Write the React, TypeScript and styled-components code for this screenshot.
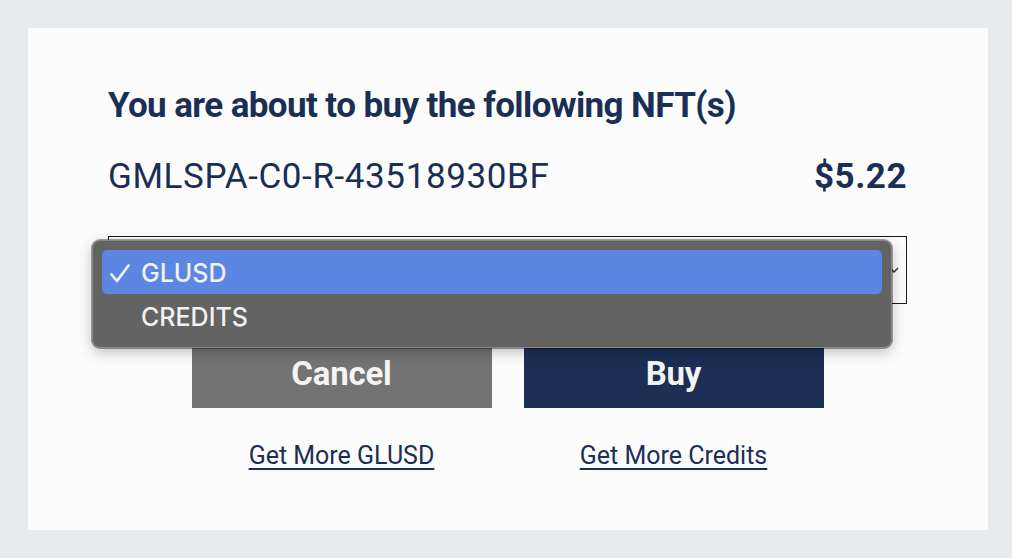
import React from "react";
import styled, { createGlobalStyle } from "styled-components";

const Global = createGlobalStyle`
  html, body { margin: 0; padding: 0; background: #e8ebee; }
  body { font-family: Roboto, "Liberation Sans", sans-serif; }
`;

const Page = styled.div`
  width: 1012px;
  height: 558px;
  box-sizing: border-box;
  padding: 28px 24px 28px 28px;
`;

const Card = styled.div`
  background: #fcfcfc;
  height: 502px;
  box-sizing: border-box;
  padding: 58px 81px 0 80px;
  display: flex;
  flex-direction: column;
`;

const Title = styled.h1`
  margin: 0;
  font-size: 35px;
  line-height: 40px;
  font-weight: 700;
  color: #1b2f55;
  letter-spacing: -0.6px;
`;

const ItemRow = styled.div`
  display: flex;
  justify-content: space-between;
  align-items: center;
  margin-top: 30px;
  color: #1b2f55;
  font-size: 35px;
  line-height: 42px;
`;

const ItemName = styled.span`
  font-weight: 400;
  letter-spacing: 0.6px;
`;

const Price = styled.span`
  font-weight: 700;
  letter-spacing: 0.5px;
`;

const SelectWrap = styled.div`
  position: relative;
  margin-top: 38px;
`;

const SelectBox = styled.div`
  height: 68px;
  box-sizing: border-box;
  border: 1px solid #1a1a1a;
  display: flex;
  justify-content: flex-end;
  align-items: center;
  padding-right: 7px;
`;

const Menu = styled.div`
  position: absolute;
  left: -16px;
  top: 4px;
  width: 800px;
  height: 108px;
  box-sizing: border-box;
  background: #636363;
  border: 1px solid #8a8a8a;
  border-radius: 8px;
  box-shadow: 0 4px 14px rgba(0, 0, 0, 0.25), 0 0 0 1px rgba(0, 0, 0, 0.35);
  padding: 9px 9px;
  display: flex;
  flex-direction: column;
`;

const Option = styled.div<{ $active?: boolean }>`
  height: 44px;
  border-radius: 5px;
  background: ${(p) => (p.$active ? "#5b87e3" : "transparent")};
  color: #f2f2f2;
  font-size: 25px;
  display: flex;
  align-items: center;
  padding-left: 8px;
  padding-top: 2px;
  box-sizing: border-box;
  font-family: Inter, Roboto, sans-serif;
  font-weight: 500;
`;

const Check = styled.span`
  width: 31px;
  display: inline-flex;
  align-items: center;
`;

const Buttons = styled.div`
  display: flex;
  justify-content: center;
  gap: 32px;
  margin-top: 34px;
`;

const Btn = styled.button<{ $primary?: boolean }>`
  width: 300px;
  height: 70px;
  border: none;
  background: ${(p) => (p.$primary ? "#1b2f55" : "#737373")};
  color: #f4f4f4;
  font-family: Roboto, sans-serif;
  font-size: 33px;
  font-weight: 700;
  letter-spacing: -0.2px;
  padding: 0;
`;

const Links = styled.div`
  display: flex;
  justify-content: center;
  gap: 32px;
  margin-top: 33px;
`;

const LinkCell = styled.div`
  width: 300px;
  display: flex;
  justify-content: center;
`;

const Link = styled.a`
  color: #1b2f55;
  font-size: 25px;
  line-height: 30px;
  text-decoration: underline;
  text-underline-offset: 4px;
  text-decoration-thickness: 1.5px;
`;

export default function App() {
  return (
    <>
      <Global />
      <Page>
        <Card>
          <Title>You are about to buy the following NFT(s)</Title>
          <ItemRow>
            <ItemName>GMLSPA-C0-R-43518930BF</ItemName>
            <Price>$5.22</Price>
          </ItemRow>
          <SelectWrap>
            <SelectBox>
              <svg width="10" height="8" viewBox="0 0 10 8">
                <path d="M1 2 L5 6 L9 2" stroke="#333" strokeWidth="1.5" fill="none" />
              </svg>
            </SelectBox>
            <Menu>
              <Option $active>
                <Check>
                  <svg width="20" height="19" viewBox="0 0 20 19">
                    <path
                      d="M1.5 10.5 L7 17 L18.5 1.5"
                      stroke="#f4f4f4"
                      strokeWidth="2.6"
                      strokeLinecap="round"
                      strokeLinejoin="round"
                      fill="none"
                    />
                  </svg>
                </Check>
                GLUSD
              </Option>
              <Option>
                <Check />
                CREDITS
              </Option>
            </Menu>
          </SelectWrap>
          <Buttons>
            <Btn>Cancel</Btn>
            <Btn $primary>Buy</Btn>
          </Buttons>
          <Links>
            <LinkCell>
              <Link href="#">Get More GLUSD</Link>
            </LinkCell>
            <LinkCell>
              <Link href="#">Get More Credits</Link>
            </LinkCell>
          </Links>
        </Card>
      </Page>
    </>
  );
}
